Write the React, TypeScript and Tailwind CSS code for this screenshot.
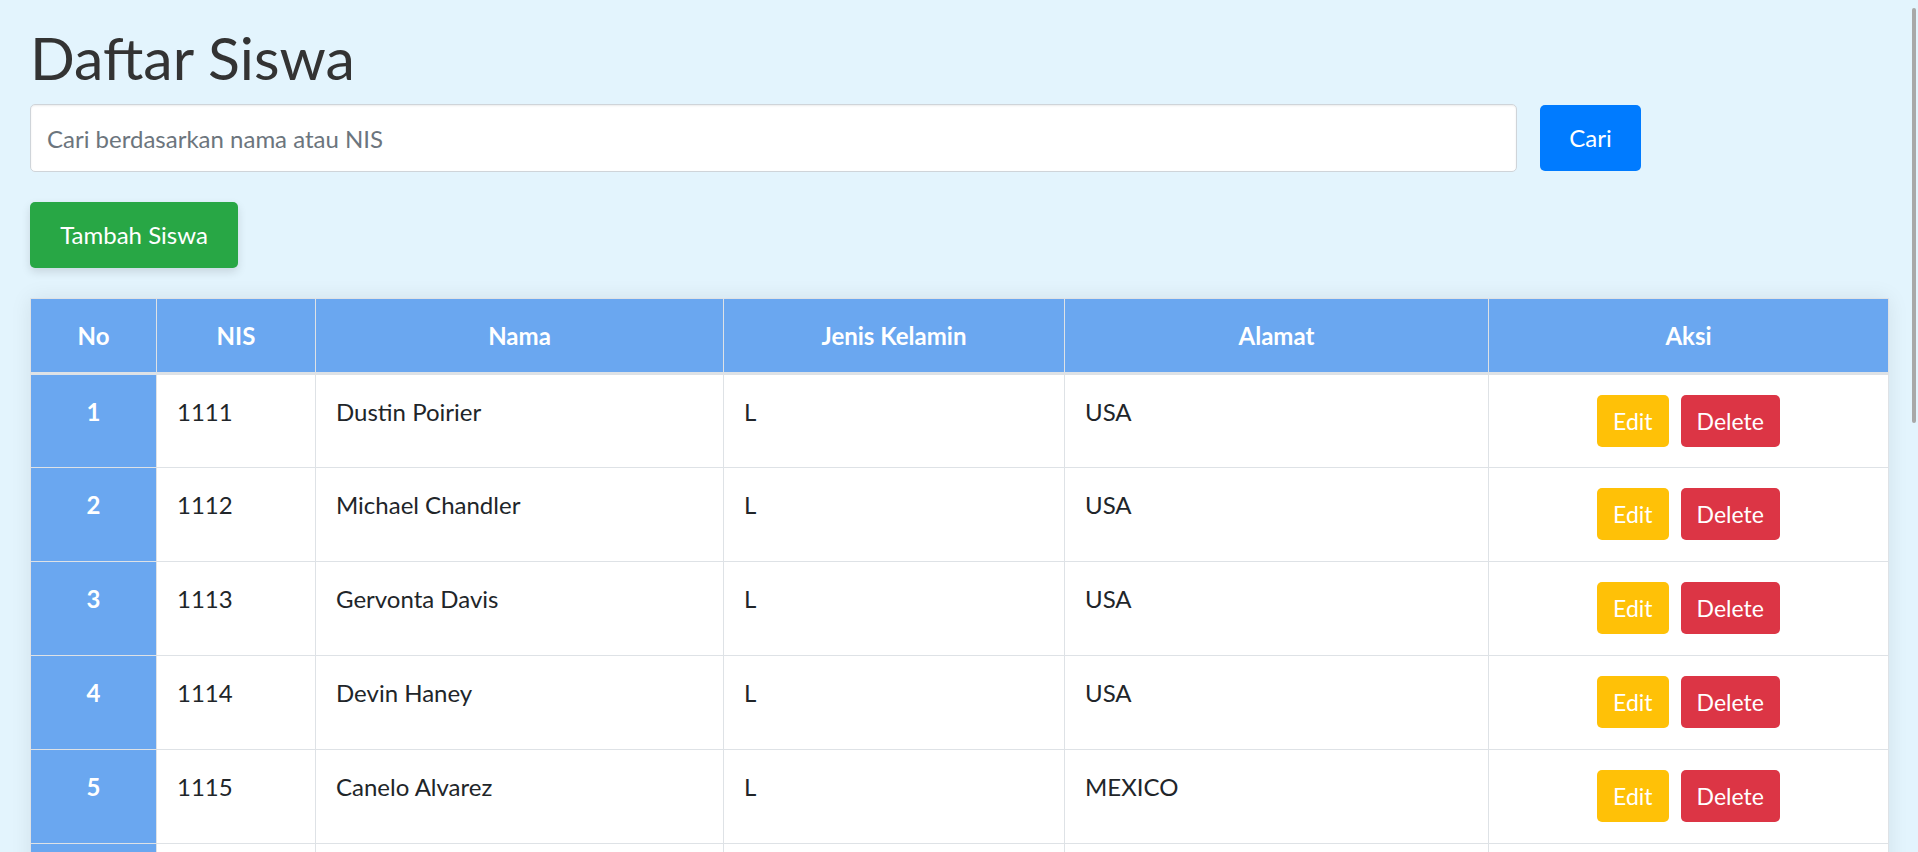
import { useState } from 'react'

type Siswa = {
  nis: string
  nama: string
  jk: string
  alamat: string
}

const siswa: Siswa[] = [
  { nis: '1111', nama: 'Dustin Poirier', jk: 'L', alamat: 'USA' },
  { nis: '1112', nama: 'Michael Chandler', jk: 'L', alamat: 'USA' },
  { nis: '1113', nama: 'Gervonta Davis', jk: 'L', alamat: 'USA' },
  { nis: '1114', nama: 'Devin Haney', jk: 'L', alamat: 'USA' },
  { nis: '1115', nama: 'Canelo Alvarez', jk: 'L', alamat: 'MEXICO' },
]

const th =
  'h-[75px] border border-b-[3px] border-[#dee2e6] bg-[#6aa7f0] text-center align-middle font-bold text-white'
const td = 'h-[94px] border border-[#dee2e6] px-5 pt-[19px] align-top'

export default function App() {
  const [query, setQuery] = useState('')

  return (
    <div className="relative h-[852px] overflow-hidden bg-[#e3f4fd] px-[30px] font-['Lato',sans-serif] text-[24px] text-[#212529]">
      <h1 className="mt-[22px] mb-[10px] text-[59px] leading-[72px] font-normal text-[#333333]">
        Daftar Siswa
      </h1>

      <div className="flex items-center gap-[23px]">
        <input
          value={query}
          onChange={(e) => setQuery(e.target.value)}
          placeholder="Cari berdasarkan nama atau NIS"
          className="h-[68px] w-[1487px] rounded-[5px] border border-[#cfd4d9] bg-white px-4 text-[24px] shadow-[inset_0_1px_2px_rgba(0,0,0,0.075)] outline-none placeholder:text-[#6c757d]"
        />
        <button className="h-[66px] w-[101px] rounded-[5px] bg-[#007bff] text-white">Cari</button>
      </div>

      <button className="mt-[30px] h-[66px] w-[208px] rounded-[5px] bg-[#28a745] text-white shadow-[0_4px_10px_rgba(0,0,0,0.12)]">
        Tambah Siswa
      </button>

      <table className="mt-[30px] w-[1859px] table-fixed border-collapse bg-white shadow-[0_0_20px_rgba(0,0,0,0.08)]">
        <colgroup>
          <col className="w-[126px]" />
          <col className="w-[159px]" />
          <col className="w-[408px]" />
          <col className="w-[341px]" />
          <col className="w-[424px]" />
          <col />
        </colgroup>
        <thead>
          <tr>
            <th className={th}>No</th>
            <th className={th}>NIS</th>
            <th className={th}>Nama</th>
            <th className={th}>Jenis Kelamin</th>
            <th className={th}>Alamat</th>
            <th className={th}>Aksi</th>
          </tr>
        </thead>
        <tbody>
          {siswa.map((s, i) => (
            <tr key={s.nis}>
              <td className={`${td} bg-[#6aa7f0] text-center font-bold text-white`}>{i + 1}</td>
              <td className={td}>{s.nis}</td>
              <td className={td}>{s.nama}</td>
              <td className={td}>{s.jk}</td>
              <td className={td}>{s.alamat}</td>
              <td className="h-[94px] border border-[#dee2e6] pt-[20px] align-top">
                <div className="flex justify-center gap-3">
                  <button className="h-[52px] rounded-[5px] bg-[#ffc107] px-4 text-[23px] text-white">
                    Edit
                  </button>
                  <button className="h-[52px] rounded-[5px] bg-[#dc3545] px-4 text-[23px] text-white">
                    Delete
                  </button>
                </div>
              </td>
            </tr>
          ))}
          {/* next row, only its top edge shows in the viewport */}
          <tr>
            <td className={`${td} bg-[#6aa7f0]`} />
            <td className={td} />
            <td className={td} />
            <td className={td} />
            <td className={td} />
            <td className={td} />
          </tr>
        </tbody>
      </table>

      {/* scroll indicator */}
      <div className="absolute top-[8px] right-[2px] h-[415px] w-[4px] rounded-full bg-[#a8a8a8]" />
    </div>
  )
}
